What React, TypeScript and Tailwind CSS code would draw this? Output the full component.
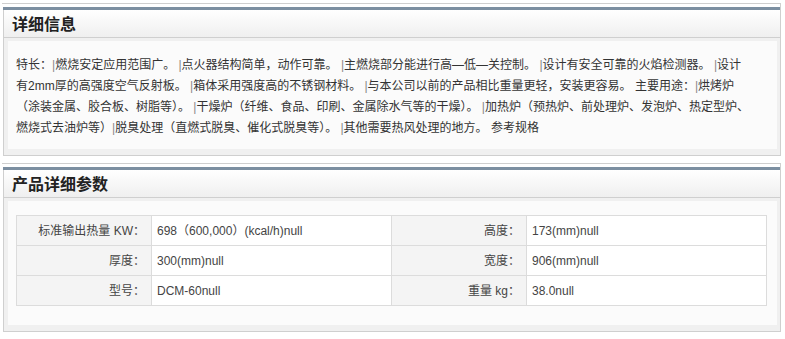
const font = {
	fontFamily: '"Liberation Sans", "Noto Sans CJK SC", sans-serif',
};

const lines = [
	"特长：|燃烧安定应用范围广。 |点火器结构简单，动作可靠。 |主燃烧部分能进行高—低—关控制。 |设计有安全可靠的火焰检测器。 |设计",
	"有2mm厚的高强度空气反射板。 |箱体采用强度高的不锈钢材料。 |与本公司以前的产品相比重量更轻，安装更容易。 主要用途：|烘烤炉",
	"（涂装金属、胶合板、树脂等）。 |干燥炉（纤维、食品、印刷、金属除水气等的干燥）。 |加热炉（预热炉、前处理炉、发泡炉、热定型炉、",
	"燃烧式去油炉等）|脱臭处理（直燃式脱臭、催化式脱臭等）。 |其他需要热风处理的地方。 参考规格",
];

const params = [
	["标准输出热量 KW：", "698（600,000）(kcal/h)null", "高度：", "173(mm)null"],
	["厚度：", "300(mm)null", "宽度：", "906(mm)null"],
	["型号：", "DCM-60null", "重量 kg：", "38.0null"],
];

function Panel({ title, children }: { title: string; children: React.ReactNode }) {
	return (
		<div className="ml-[2px] w-[779px] border-t border-r border-[#cfcfcf] pt-[3px] pl-[1px]">
			<div className="h-[3px] bg-[#7c8fa1]" />
			<div className="h-[28px] border-l border-b border-[#cfcfcf] bg-gradient-to-b from-white to-[#efefef] pl-[8px] pt-[2px] flex items-center">
				<h3 className="text-[16px] font-bold text-[#222] leading-none">{title}</h3>
			</div>
			<div className="border-l border-b border-[#cfcfcf] bg-[#f0f0f0] pt-[3px] pb-[6px] pl-[4px] pr-[3px]">
				{children}
			</div>
		</div>
	);
}

export default function App() {
	return (
		<div className="w-[785px] h-[339px] bg-white pt-[3px] overflow-hidden" style={font}>
			<Panel title="详细信息">
				<div className="bg-[#fbfbfb] pl-[8px] pt-[14px] pb-[10px] text-[12px] leading-[21px] text-[#333] whitespace-nowrap">
					{lines.map((l, i) => (
						<div key={i}>
							{l.split("|").map((part, j) => (
								<span key={j}>
									{j > 0 && <span className="text-[#888]">|</span>}
									{part}
								</span>
							))}
						</div>
					))}
				</div>
			</Panel>
			<div className="h-[7px]" />
			<Panel title="产品详细参数">
				<div className="bg-[#fbfbfb] pl-[8px] pt-[14px] pb-[19px]">
					<table className="w-[750px] border-collapse text-[12px] text-[#444] table-fixed">
						<colgroup>
							<col className="w-[135px]" />
							<col className="w-[240px]" />
							<col className="w-[135px]" />
							<col className="w-[240px]" />
						</colgroup>
						<tbody>
							{params.map((row, i) => (
								<tr key={i} className="h-[30px]">
									<td className="border border-[#dcdcdc] bg-[#f4f4f4] text-right pr-[6px]">{row[0]}</td>
									<td className="border border-[#dcdcdc] bg-white pl-[5px]">{row[1]}</td>
									<td className="border border-[#dcdcdc] bg-[#f4f4f4] text-right pr-[6px]">{row[2]}</td>
									<td className="border border-[#dcdcdc] bg-white pl-[5px]">{row[3]}</td>
								</tr>
							))}
						</tbody>
					</table>
				</div>
			</Panel>
		</div>
	);
}
